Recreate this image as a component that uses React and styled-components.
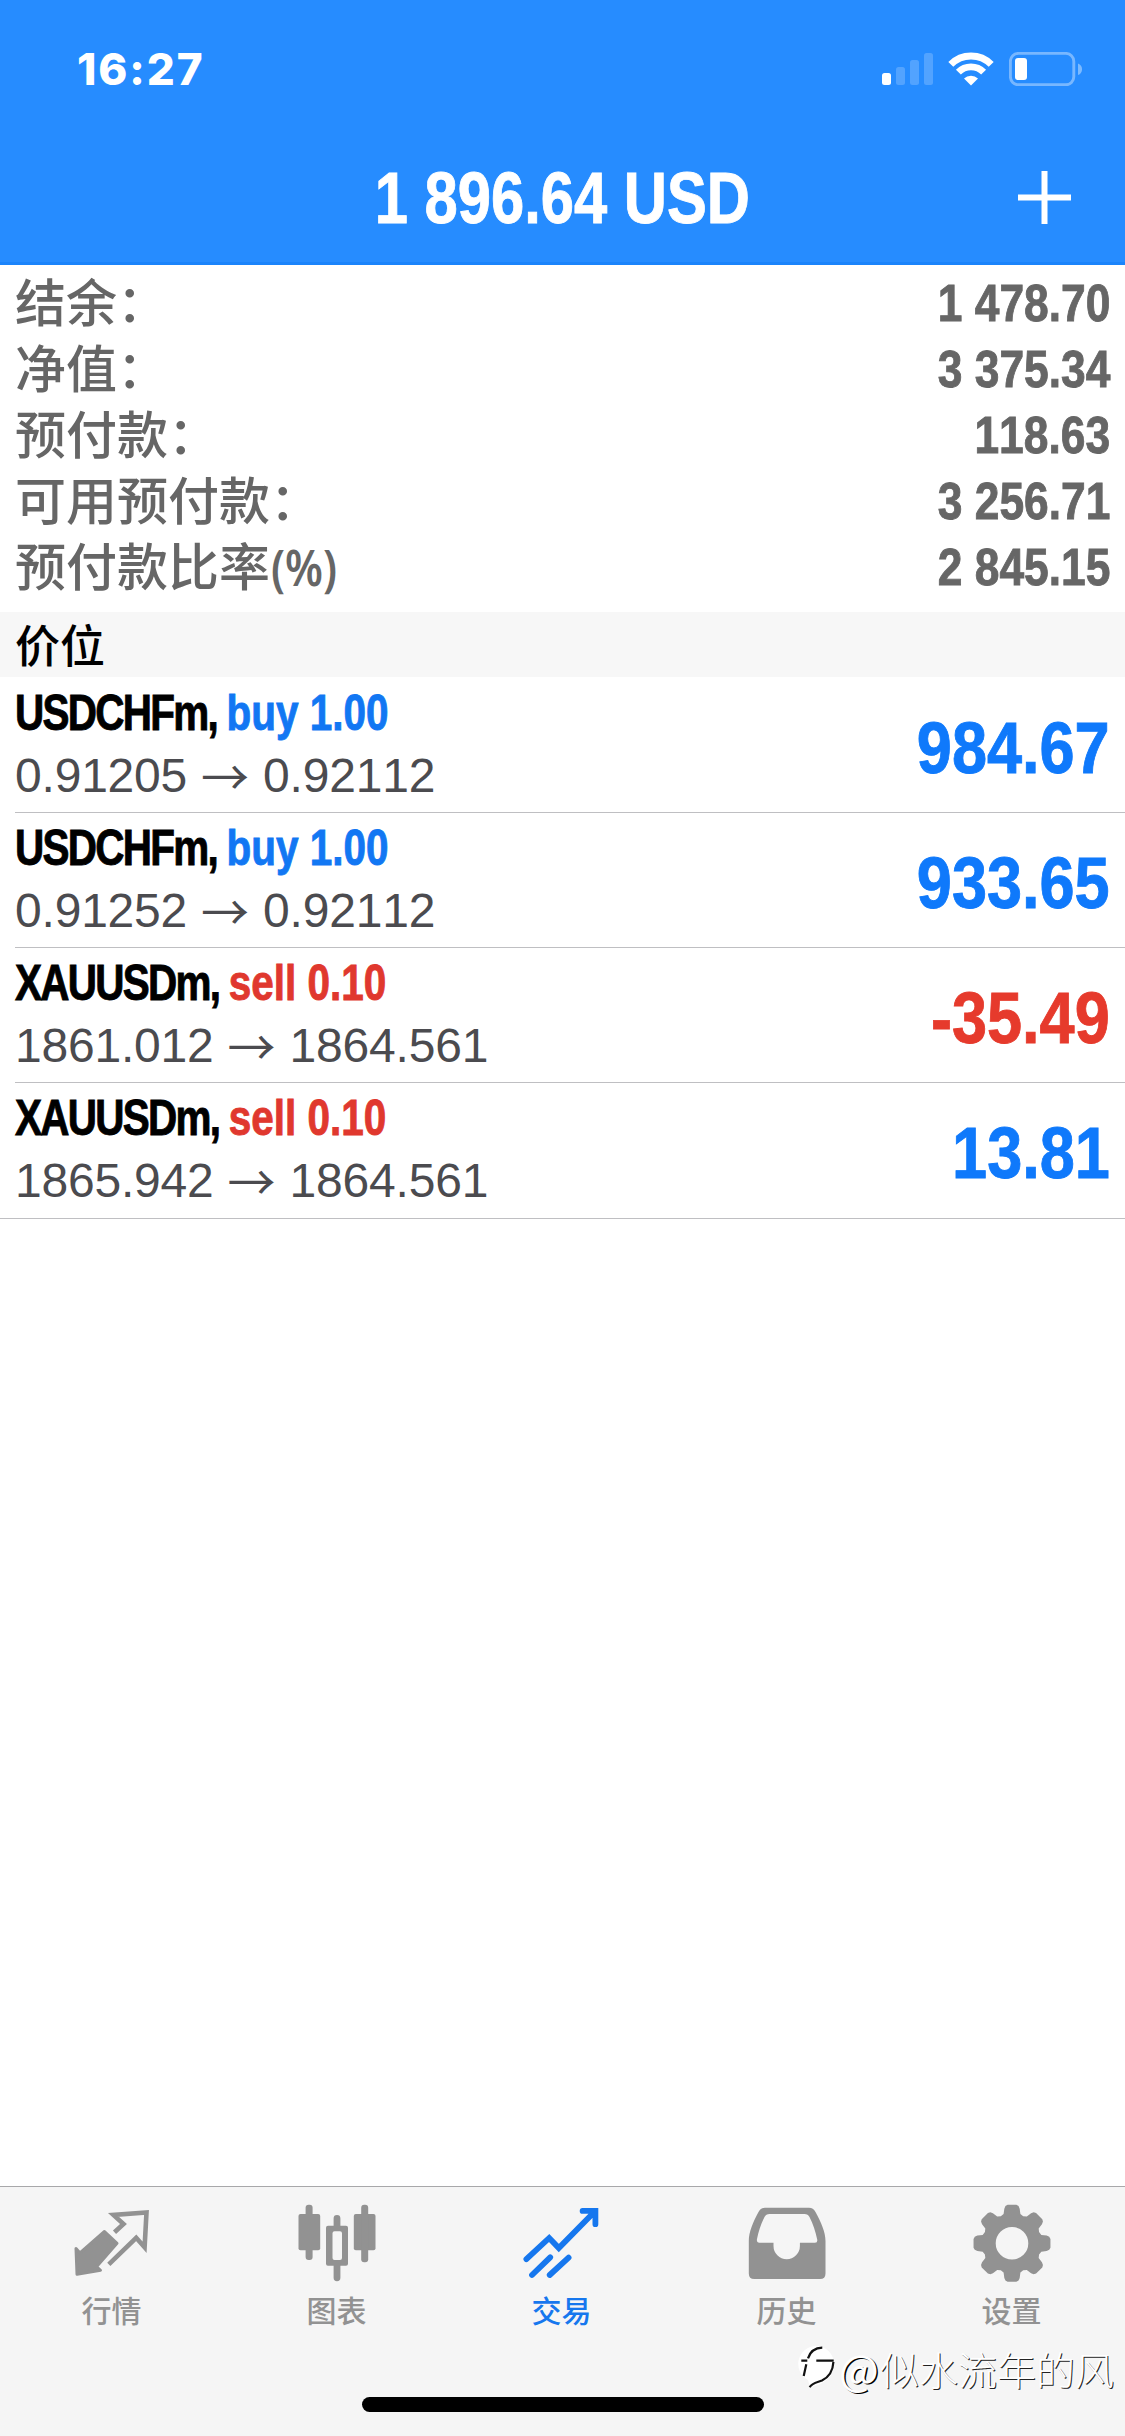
import React from 'react';
import styled, { createGlobalStyle } from 'styled-components';

const GlobalStyle = createGlobalStyle`
  * {
    box-sizing: border-box;
  }
  body {
    margin: 0;
    background: #fff;
  }
`;

const cjk = '"Noto Sans CJK SC", sans-serif';
const latin = '"Liberation Sans", Arial, sans-serif';

const Screen = styled.div`
  width: 1125px;
  height: 2436px;
  display: flex;
  flex-direction: column;
  overflow: hidden;
  background: #fff;
  font-family: ${latin};
`;

const Header = styled.header`
  height: 265px;
  flex: none;
  background: #268cff;
  border-bottom: 3px solid #1b84fb;
  color: #fff;
`;

const StatusBar = styled.div`
  height: 132px;
  padding: 6px 43px 0 77px;
  display: flex;
  align-items: center;
  justify-content: space-between;
`;

const Time = styled.div`
  font: 800 44px/60px Inter, sans-serif;
  letter-spacing: 1.9px;
`;

const NavBar = styled.div`
  height: 130px;
  padding: 0 54px;
  display: grid;
  grid-template-columns: 53px 1fr 53px;
  align-items: center;
`;

// squeezes the bold face into a condensed one
const Condensed = styled.span`
  display: inline-block;
  font-weight: 700;
  font-kerning: none;
  white-space: nowrap;
  -webkit-text-stroke: 0.9px currentColor;
  transform: scaleX(${props => props.$ratio});
  transform-origin: ${props => props.$origin || 'left'} center;
`;

const Title = styled.h1`
  margin: 2px 0 0;
  grid-column: 2;
  justify-self: center;
  font-size: 73px;
  line-height: 84px;
`;

const AddButton = styled.button`
  padding: 0;
  border: none;
  background: none;
  display: flex;
`;

const Summary = styled.section`
  height: 347px;
  flex: none;
  padding: 5px 15px 0 15px;
  color: #666;
`;

const SummaryRow = styled.div`
  height: 66px;
  display: flex;
  justify-content: space-between;
`;

const SummaryLabel = styled.div`
  margin-top: 2px;
  font: 500 51px/66px "Liberation Sans", ${cjk};
`;

const LabelSuffix = styled(Condensed)`
  margin-left: 1px;
  font-family: "Noto Sans", sans-serif;
  font-weight: 600;
  line-height: 60px;
  -webkit-text-stroke: 0;
`;

const SummaryValue = styled(Condensed)`
  font-size: 52px;
  line-height: 66px;
`;

const SectionTitle = styled.h2`
  margin: 0;
  height: 65px;
  flex: none;
  padding-left: 15px;
  background: #f7f7f7;
  color: #000;
  font: 500 45px/64px ${cjk};
`;

const Positions = styled.ul`
  margin: 0;
  padding: 1px 0 0;
  flex: 1;
  list-style: none;
`;

const Position = styled.li`
  padding-left: 15px;
  &:last-child {
    padding-left: 0;
    border-bottom: 1px solid #bfbfc2;
  }
  &:last-child > div {
    padding-left: 15px;
    border-bottom: none;
  }
`;

const PositionBody = styled.div`
  height: 135px;
  padding-right: 15px;
  display: flex;
  justify-content: space-between;
  border-bottom: 1px solid #bfbfc2;
`;

const Deal = styled(Condensed)`
  display: block;
  font-size: 49.5px;
  line-height: 58px;
  margin-top: 6px;
  color: ${props => (props.$side === 'buy' ? '#1277f3' : '#e0382e')};
`;

const Ticker = styled.span`
  color: #000;
  letter-spacing: -2.1px;
`;

const Prices = styled.div`
  display: flex;
  align-items: center;
  gap: 14px;
  margin-top: 3px;
  color: #4b4b4f;
  font-size: 48px;
  font-kerning: none;
  line-height: 62px;
  letter-spacing: -0.2px;
`;

const Arrow = styled.span`
  width: 48px;
  margin-top: -5px;
  font: 400 48px/62px ${cjk};
`;

const Profit = styled(Condensed)`
  font-size: 71.5px;
  line-height: 140px;
  height: 134px;
  color: ${props => (props.$loss ? '#e63a2c' : '#0f79fb')};
`;

const TabBar = styled.nav`
  height: 250px;
  flex: none;
  border-top: 1px solid #a8a8aa;
  background: #f5f5f5;
  position: relative;
`;

const Tabs = styled.div`
  display: grid;
  grid-template-columns: repeat(5, 1fr);
  padding-top: 16px;
`;

const Tab = styled.div`
  display: flex;
  flex-direction: column;
  align-items: center;
  padding-right: 1px;
  color: ${props => (props.$active ? '#1677ee' : '#929292')};
`;

const TabLabel = styled.span`
  margin: 4px 1px 0 0;
  font: 500 30px/44px ${cjk};
`;

const HomeIndicator = styled.div`
  width: 402px;
  height: 15px;
  margin: 66px auto 0;
  border-radius: 8px;
  background: #000;
`;

const Watermark = styled.div`
  position: absolute;
  top: 157px;
  right: 11px;
  display: flex;
  align-items: center;
  color: #fff;
  font: 300 39px/48px ${cjk};
  text-shadow: 1px 1px 0 #222;
`;

const WatermarkAt = styled.span`
  width: 41px;
  font-size: 42px;
  font-weight: 400;
  text-shadow: 1.5px 1px 0 #000;
`;

const SignalIcon = () => (
  <svg width="51" height="34" viewBox="0 0 51 34" fill="#fff">
    <rect x="0" y="21" width="9" height="12" rx="2.5" />
    <g opacity="0.2">
      <rect x="14" y="15" width="9" height="18" rx="2.5" />
      <rect x="28" y="8" width="9" height="25" rx="2.5" />
      <rect x="42" y="1" width="9" height="32" rx="2.5" />
    </g>
  </svg>
);

const WifiIcon = () => (
  <svg width="46" height="34" viewBox="0 0 46 34" fill="none" stroke="#fff">
    <path d="M2.8 12.4 A28.5 28.5 0 0 1 43.2 12.4" strokeWidth="7" />
    <path d="M10.4 20.2 A17.5 17.5 0 0 1 35.6 20.2" strokeWidth="6.8" />
    <path d="M16 26.5 A10 10 0 0 1 30 26.5 L23 33.5 Z" fill="#fff" stroke="none" />
  </svg>
);

const BatteryIcon = () => (
  <svg width="73" height="34" viewBox="0 0 73 34">
    <rect x="1.4" y="1.4" width="63.4" height="31.4" rx="8" fill="none" stroke="#fff" strokeOpacity="0.38" strokeWidth="2.9" />
    <path d="M69 11.5 Q73 13 73 17.2 Q73 21.5 69 23 Z" fill="#fff" opacity="0.4" />
    <rect x="6" y="6" width="12" height="22" rx="3" fill="#fff" />
  </svg>
);

const StatusIcons = styled.div`
  display: flex;
  align-items: center;
  gap: 15px;
`;

const PlusIcon = () => (
  <svg width="53" height="53" viewBox="0 0 53 53" fill="none" stroke="#fff" strokeWidth="6">
    <path d="M26.5 0V53M0 26.5H53" />
  </svg>
);

const QuotesIcon = () => (
  <svg width="80" height="80" viewBox="0 0 80 80">
    <path d="M42.5 29.3L51.5 21L41.5 12L74.5 9.5L72.6 44.3L64.2 34.8L36.8 61.3" fill="none" stroke="currentColor" strokeWidth="4.6" />
    <path d="M4 45.5L8 50L32.5 28.5L45 40.3L24.5 63.7L28.5 67.3L5 71.3Z" fill="currentColor" stroke="currentColor" strokeWidth="3" strokeLinejoin="round" />
  </svg>
);

const ChartIcon = () => (
  <svg width="80" height="80" viewBox="0 0 80 80" fill="currentColor">
    <rect x="1.5" y="11" width="21.7" height="36.3" rx="2" />
    <rect x="8.6" y="1.7" width="7" height="55.3" rx="3" />
    <path fillRule="evenodd" d="M31 22.7H49a2 2 0 0 1 2 2V60.7a2 2 0 0 1-2 2H31a2 2 0 0 1-2-2V24.7a2 2 0 0 1 2-2ZM37.5 28.3a2 2 0 0 0-2 2V55a2 2 0 0 0 2 2H43a2 2 0 0 0 2-2V30.3a2 2 0 0 0-2-2Z" />
    <path d="M36.6 24V15.5a3.4 3.4 0 0 1 6.8 0V24ZM36.6 61V74.8a3.4 3.4 0 0 0 6.8 0V61Z" />
    <rect x="56.8" y="11" width="21.7" height="36.3" rx="2" />
    <rect x="64.2" y="1.7" width="7" height="57.6" rx="3" />
  </svg>
);

const TradeIcon = () => (
  <svg width="80" height="80" viewBox="0 0 80 80" fill="none" stroke="currentColor" strokeWidth="5.8" strokeLinecap="round">
    <path d="M4.4 56.2L27.2 35L36.8 45L72.5 8.7M60.6 7.9H73.4V21.2" />
    <path d="M10 72L28.2 54.3M27.7 72L46.6 54.6" />
  </svg>
);

const HistoryIcon = () => (
  <svg width="80" height="80" viewBox="0 0 80 80" fill="currentColor">
    <path
      fillRule="evenodd"
      d="M18 4.7H62C65 4.7 66.8 6 68.5 9C74 19 78.5 29 78.5 38V70.5Q78.5 76 73 76H7.3Q1.8 76 1.8 70.5V38C1.8 29 6 19 11.5 9C13.2 6 15 4.7 18 4.7Z M22.5 11Q19 11 17.5 14C14 21 11.5 28 9.9 36.5Q9.5 39.8 12 39.8H26.5V43A13.2 13.2 0 0 0 52.9 43V39.8H68Q70.8 39.8 70.2 36.5C68.5 28 66 21 62.5 14Q61 11 57.5 11Z"
    />
  </svg>
);

const gearPath = () => {
  const shape = [[-16, 30.5], [-12.5, 35.5], [-10, 37.8], [-6.5, 38.7], [6.5, 38.7], [10, 37.8], [12.5, 35.5], [16, 30.5], [22.5, 29.3]];
  const points = [];
  for (let tooth = 0; tooth < 8; tooth++) {
    shape.forEach(([deg, r]) => {
      const a = ((tooth * 45 + deg) * Math.PI) / 180;
      points.push(`${(40 + r * Math.sin(a)).toFixed(2)} ${(40.3 - r * Math.cos(a)).toFixed(2)}`);
    });
  }
  return `M${points.join('L')}Z`;
};

const SettingsIcon = () => (
  <svg width="80" height="80" viewBox="0 0 80 80" fill="currentColor">
    <path fillRule="evenodd" d={`${gearPath()}M56.3 40.3a16.3 16.3 0 1 0-32.6 0a16.3 16.3 0 1 0 32.6 0Z`} />
  </svg>
);

const WatermarkLogo = () => (
  <svg width="43" height="48" viewBox="0 0 43 48">
    <path d="M20 2A18 18 0 0 1 38 20C38 33 27 41 14 43L12 36A18 18 0 0 1 20 2Z" fill="#fff" />
    <path
      d="M5.3 16.7H11.3M12 14.3C14 8 18 4 26.3 3.7M20.3 16.7H37.7M37.4 18C37 26 33 33 26 36.5C21 38.5 16 39 13.7 43.3M10.3 20.3L7.7 32"
      fill="none"
      stroke="#111"
      strokeWidth="2.2"
    />
  </svg>
);

const summary = [
  { label: '结余：', value: '1 478.70' },
  { label: '净值：', value: '3 375.34' },
  { label: '预付款：', value: '118.63' },
  { label: '可用预付款：', value: '3 256.71' },
  { label: '预付款比率', suffix: '(%)', value: '2 845.15' },
];

const positions = [
  { symbol: 'USDCHFm', side: 'buy', volume: '1.00', open: '0.91205', current: '0.92112', profit: '984.67' },
  { symbol: 'USDCHFm', side: 'buy', volume: '1.00', open: '0.91252', current: '0.92112', profit: '933.65' },
  { symbol: 'XAUUSDm', side: 'sell', volume: '0.10', open: '1861.012', current: '1864.561', profit: '-35.49' },
  { symbol: 'XAUUSDm', side: 'sell', volume: '0.10', open: '1865.942', current: '1864.561', profit: '13.81' },
];

const tabs = [
  { label: '行情', icon: QuotesIcon },
  { label: '图表', icon: ChartIcon },
  { label: '交易', icon: TradeIcon, active: true },
  { label: '历史', icon: HistoryIcon },
  { label: '设置', icon: SettingsIcon },
];

const App = () => (
  <Screen>
    <GlobalStyle />
    <Header>
      <StatusBar>
        <Time>16:27</Time>
        <StatusIcons>
          <SignalIcon />
          <WifiIcon />
          <BatteryIcon />
        </StatusIcons>
      </StatusBar>
      <NavBar>
        <Title>
          <Condensed $ratio={0.818} $origin="center">1 896.64 USD</Condensed>
        </Title>
        <AddButton>
          <PlusIcon />
        </AddButton>
      </NavBar>
    </Header>
    <Summary>
      {summary.map(row => (
        <SummaryRow key={row.label}>
          <SummaryLabel>
            {row.label}
            {row.suffix && <LabelSuffix $ratio={0.85}>{row.suffix}</LabelSuffix>}
          </SummaryLabel>
          <SummaryValue $ratio={0.853} $origin="right">{row.value}</SummaryValue>
        </SummaryRow>
      ))}
    </Summary>
    <SectionTitle>价位</SectionTitle>
    <Positions>
      {positions.map(item => (
        <Position key={item.open}>
          <PositionBody>
            <div>
              <Deal $ratio={0.817} $side={item.side}>
                <Ticker>{item.symbol}, </Ticker>
                {item.side} {item.volume}
              </Deal>
              <Prices>
                <span>{item.open}</span>
                <Arrow>→</Arrow>
                <span>{item.current}</span>
              </Prices>
            </div>
            <Profit $ratio={0.882} $origin="right" $loss={item.profit.startsWith('-')}>
              {item.profit}
            </Profit>
          </PositionBody>
        </Position>
      ))}
    </Positions>
    <TabBar>
      <Tabs>
        {tabs.map(({ label, icon: Icon, active }) => (
          <Tab key={label} $active={active}>
            <Icon />
            <TabLabel>{label}</TabLabel>
          </Tab>
        ))}
      </Tabs>
      <HomeIndicator />
      <Watermark>
        <WatermarkLogo />
        <WatermarkAt>@</WatermarkAt>
        似水流年的风
      </Watermark>
    </TabBar>
  </Screen>
);

export default App;
